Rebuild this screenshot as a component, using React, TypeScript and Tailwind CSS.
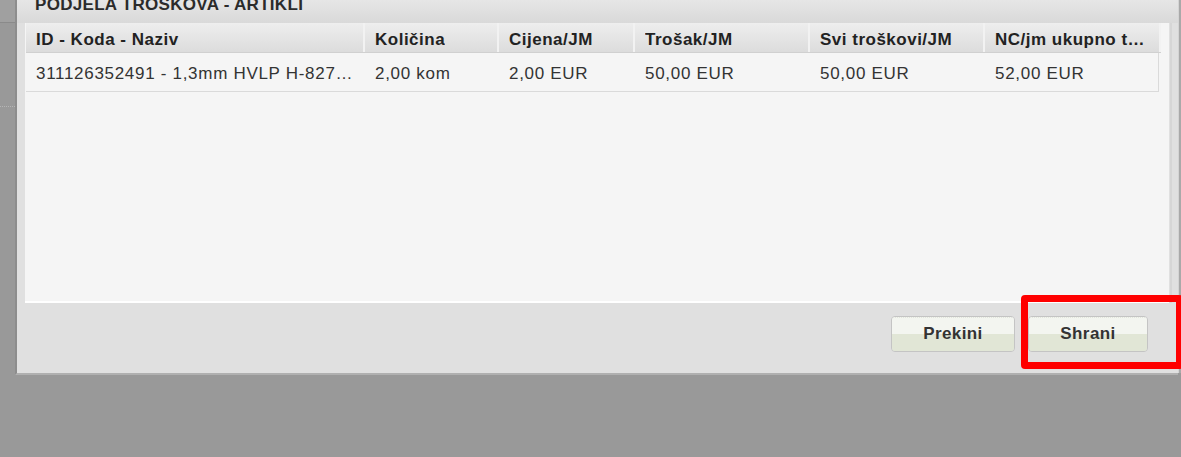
const columns = [
  { key: "naziv", header: "ID - Koda - Naziv", width: "w-[339px]" },
  { key: "kolicina", header: "Količina", width: "w-[134px]" },
  { key: "cijena", header: "Cijena/JM", width: "w-[136px]" },
  { key: "trosak", header: "Trošak/JM", width: "w-[175px]" },
  { key: "svi", header: "Svi troškovi/JM", width: "w-[175px]" },
  { key: "nc", header: "NC/jm ukupno troškovi", width: "w-[176px]" },
];

const rows: Record<string, string>[] = [
  {
    naziv: "311126352491 - 1,3mm HVLP H-827 Pištolj za lakiranje",
    kolicina: "2,00 kom",
    cijena: "2,00 EUR",
    trosak: "50,00 EUR",
    svi: "50,00 EUR",
    nc: "52,00 EUR",
  },
];

const Button = ({ label, width }: { label: string; width: string }) => {
  return (
    <button
      className={`${width} h-[36px] rounded-[4px] border border-[#c4c4c4] overflow-hidden flex flex-col relative`}
    >
      <div className="h-1/2 w-full bg-[#f3f5f0] border-t border-dotted border-[#e2e6dc]" />
      <div className="h-1/2 w-full bg-[#e1e6d6]" />
      <span className="absolute inset-0 flex items-center justify-center text-[17px] tracking-[0.4px] font-bold text-[#333]">
        {label}
      </span>
    </button>
  );
};

export default function App() {
  return (
    <div
      className="w-[1181px] h-[457px] bg-[#999] overflow-hidden relative flex"
      style={{ fontFamily: '"Liberation Sans", Arial, sans-serif' }}
    >
      {/* left page strip */}
      <div className="w-[15px] shrink-0 flex flex-col">
        <div className="h-[23px] bg-[#a0a0a0] border-b border-[#8a8a8a]" />
        <div className="h-[84px] border-b border-dotted border-[#b5b5b5]" />
      </div>

      {/* dialog */}
      <div className="w-[1163px] h-[385px] -mt-[10px] bg-[#e0e0e0] border-l-2 border-[#8d8d8d] border-b-2 border-b-[#b0b0b0] flex flex-col shrink-0">
        <div className="h-[33px] bg-gradient-to-b from-[#ececec] to-[#d9d9d9] flex items-start pl-[18px] pt-[6px] overflow-hidden">
          <span className="text-[17px] leading-[17px] tracking-[0.3px] font-bold text-[#2b2b2b] whitespace-nowrap">
            PODJELA TROŠKOVA - ARTIKLI
          </span>
        </div>

        <div className="flex">
          <div className="ml-[8px] w-[1144px] h-[280px] bg-[#f5f5f5] border-b-2 border-white">
            <div className="flex h-[30px] bg-gradient-to-b from-[#eeeeee] to-[#dcdcdc] border-b border-[#d0d0d0] ml-[1px] w-[1135px]">
              {columns.map((column) => {
                return (
                  <div
                    key={column.key}
                    className={`${column.width} shrink-0 flex items-center pt-[4px] px-[10px] border-r-2 border-[#f2f2f2] text-[17px] tracking-[0.5px] font-bold text-[#222] whitespace-nowrap overflow-hidden`}
                  >
                    <span className="overflow-hidden text-ellipsis">{column.header}</span>
                  </div>
                );
              })}
            </div>
            {rows.map((row, index) => {
              return (
                <div
                  key={index}
                  className="flex h-[39px] ml-[1px] w-[1133px] border-b border-r border-[#dadada]"
                >
                  {columns.map((column) => {
                    return (
                      <div
                        key={column.key}
                        className={`${column.width} shrink-0 flex items-center pt-[4px] px-[10px] text-[17px] tracking-[0.7px] text-[#333] whitespace-nowrap overflow-hidden`}
                      >
                        <span className="overflow-hidden text-ellipsis">{row[column.key]}</span>
                      </div>
                    );
                  })}
                </div>
              );
            })}
          </div>
          <div className="w-[2px] ml-[1px] bg-[#d6d6d6] h-[280px]" />
        </div>

        <div className="flex justify-end gap-[13px] pt-[13px] pr-[30px]">
          <Button label="Prekini" width="w-[124px]" />
          <Button label="Shrani" width="w-[120px]" />
        </div>
      </div>

      {/* right page strip */}
      <div className="w-[3px] shrink-0 bg-[#d4d4d4] h-[373px] border-r-2 border-[#a9a9a9]" />

      {/* annotation */}
      <div className="absolute left-[1021px] top-[295px] w-[162px] h-[74px] border-[7px] border-[#ff0000] rounded-[4px]" />
    </div>
  );
}
